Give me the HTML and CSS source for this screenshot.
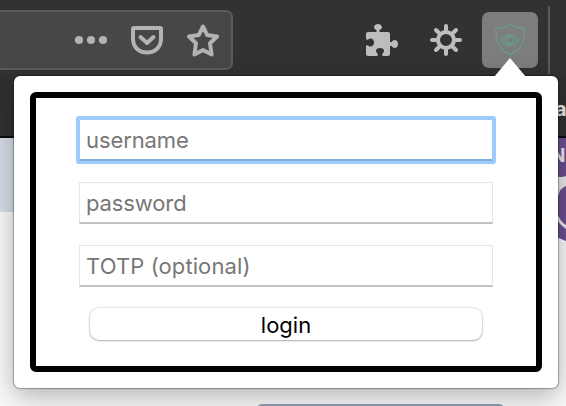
FILE: index.html
```html
<!DOCTYPE html>
<html lang="en">
<head>
<meta charset="utf-8">
<title>Login</title>
<link rel="stylesheet" href="styles.css">
</head>
<body>
<div class="browser">
  <header class="toolbar">
    <div class="urlbar">
      <svg class="dots" width="34" height="32" viewBox="0 0 34 32"><circle cx="5" cy="16" r="4.1"/><circle cx="17" cy="16" r="4.1"/><circle cx="29" cy="16" r="4.1"/></svg>
      <svg class="pocket line" width="34" height="32" viewBox="0 0 34 32"><path d="M4 4h26q1 0 1 1v10c0 8-6 13.500-14 13.500S3 23 3 15V5q0-1 1-1z"/><path d="M10.500 13l6.500 6 6.500-6"/></svg>
      <svg class="star line" width="34" height="34" viewBox="0 0 34 34"><path d="M17 3.500l4.200 8.600 9.800 1.400-7 6.800 1.600 11.200L17 27l-8.600 4.500 1.600-11.200-7-6.800 9.800-1.400z"/></svg>
    </div>
    <svg class="puzzle" width="34" height="34" viewBox="0 0 34 34"><path d="M4 9h7.500q1.500 0 1.200-1.300C12.500 6.500 10 6 10 4.500c0-2.200 1.800-3.500 4-3.500s4 1.300 4 3.500c0 1.500-2.500 2-2.700 3.200Q15 9 16.500 9H24q2 0 2 2v7q0 1.700 1.300 1.200C28.300 18.500 29 17 30.500 17c2 0 3.500 1.600 3.500 4s-1.500 4-3.500 4c-1.500 0-2.200-1.500-3.200-2.200Q26 22.300 26 24v7q0 2-2 2h-4.500q-1.600 0-1.300-1.600c.2-1.200 1.800-1.800 1.800-3.400 0-2.200-1.800-3-4-3s-4 .8-4 3c0 1.600 1.600 2.200 1.800 3.400Q14 33 12.500 33H4q-2 0-2-2v-7.500q0-1.500 1.400-1.300C4.500 22.500 5 23.500 6.500 23.500 8.800 23.500 10 21.500 10 19.500s-1.200-4-3.500-4c-1.500 0-2 1-3.100 1.300Q2 17 2 15.500V11q0-2 2-2z"/></svg>
    <svg class="gear" width="34" height="34" viewBox="0 0 34 34"><circle cx="17" cy="17" r="8"/><path d="M17 3v4M17 27v4M3 17h4M27 17h4M7 7l3 3M24 24l3 3M7 27l3-3M24 10l3-3"/></svg>
    <div class="extension">
      <svg width="32" height="34" viewBox="0 0 32 34"><path d="M16 1.500C12 4.500 7 5 1.700 5 1.800 17 4 27 16 31.500 28 27 30.200 17 30.300 5 25 5 20 4.500 16 1.500z"/><path d="M7.500 17Q16 6.500 24.500 17 16 27.500 7.500 17z"/><circle cx="16" cy="17" r="3.500"/></svg>
    </div>
    <div class="separator"></div>
  </header>
  <div class="bookmarks"><span>a</span></div>
  <main class="page">
    <div class="hero"></div>
    <svg class="brand" width="10" height="110" viewBox="0 0 10 110"><path class="purple" d="M0 0h10v103L0 99z"/><path class="light" d="M0 38Q5 40 10 38V48Q4 50 2 58H0zM0 72Q4 84 10 87V91Q3 86 0 80z"/></svg>
    <span class="brand-text">N</span>
    <div class="page-button"></div>
  </main>
</div>
<section class="popup">
  <form class="login">
    <input class="field focused" type="text" placeholder="username">
    <input class="field pass" type="password" placeholder="password">
    <input class="field totp" type="text" placeholder="TOTP (optional)">
    <button class="submit" type="button">login</button>
  </form>
</section>
</body>
</html>
```
FILE: styles.css
```css
* { box-sizing: border-box; }
body { margin: 0; width: 566px; height: 406px; overflow: hidden; position: relative; font-family: Inter, "Liberation Sans", sans-serif; }
svg { display: block; flex: none; fill: #b3b3b4; }
.browser { width: 566px; height: 406px; overflow: hidden; }
.toolbar { display: flex; height: 76px; background: #323234; }
.urlbar { flex: none; display: flex; width: 233px; height: 60px; margin-top: 10px; padding-left: 74px; border: 2px solid #5b5b5d; border-left: 0; border-radius: 0 7px 7px 0; background: #474749; }
.line { fill: none; stroke: #b3b3b4; stroke-width: 4; stroke-linejoin: round; stroke-linecap: round; }
.dots { margin-top: 12px; }
.pocket { margin: 12px 0 0 22px; }
.star { margin: 11px 0 0 22px; }
.puzzle { margin: 23px 0 0 131px; fill: #bdbdbd; }
.gear { margin: 23px 0 0 31px; fill: none; stroke: #bdbdbd; stroke-width: 4; stroke-linecap: round; }
.extension { flex: none; width: 56px; height: 56px; margin: 12px 0 0 19px; padding: 11px 0 0 12px; border-radius: 7px; background: #7d7d7d; }
.extension svg { fill: none; stroke: #659c90; stroke-width: 1.300; }
.separator { flex: none; width: 2px; height: 68px; margin: 6px 0 0 10px; background: #5b5b5d; }
.bookmarks { height: 62px; background: #303032; border-bottom: 2px solid #0c0c0d; padding: 19px 0 0 555px; color: #ededed; font-size: 20px; font-weight: 700; line-height: 28px; }
.page { position: relative; height: 268px; background: #fafafa; }
.hero { width: 14px; height: 74px; background: #d7dee9; }
.brand { position: absolute; top: 0; right: 0; }
.purple { fill: #6b4e90; }
.light { fill: #e9e7ed; }
.brand-text { position: absolute; left: 551px; top: 5px; color: #e9e7ed; font-size: 19px; font-weight: 700; line-height: 26px; }
.page-button { position: absolute; left: 256px; top: 266px; width: 249px; height: 20px; border-radius: 6px; background: #929fb6; }
.popup { position: absolute; left: 14px; top: 76px; width: 544px; height: 312px; padding: 16px; border-radius: 6px; background: #fff; box-shadow: 0 0 1px 1px rgba(0,0,0,.3), 0 8px 28px rgba(0,0,0,.3); }
.popup::before { content: ""; position: absolute; left: 480px; top: -18px; width: 32px; height: 19px; background: #fff; clip-path: polygon(50% 0, 100% 100%, 0 100%); }
.login { display: flex; flex-direction: column; width: 512px; height: 280px; margin: 0; padding: 21px 43px 0; border: 6px solid #000; border-radius: 6px; }
.field { flex: none; width: 414px; height: 42px; margin: 0 0 21px; padding: 1px 6px 0; border: 1px solid #e5e5e5; border-bottom: 2px solid #c2c2c2; border-radius: 0; outline: none; background: #fff; font: 22px/30px Inter, "Liberation Sans", sans-serif; color: #000; }
.field::placeholder { color: #777; opacity: 1; }
.username, .pass { letter-spacing: -.12px; }
.totp { letter-spacing: .1px; }
.focused { letter-spacing: -.1px; border-color: #9dcbfc; border-bottom-color: #7faee0; box-shadow: 0 0 0 3px #9dcbfc; border-radius: 1px; }
.submit { width: 392px; height: 32px; margin: 0 0 0 11px; padding: 2px 0 0; border: 0; border-radius: 9px; background: #fff; box-shadow: 0 0 1px 1px rgba(0,0,0,.1), 0 1px 2px rgba(0,0,0,.25); color: #000; font: 22px/28px Inter, "Liberation Sans", sans-serif; }
```
